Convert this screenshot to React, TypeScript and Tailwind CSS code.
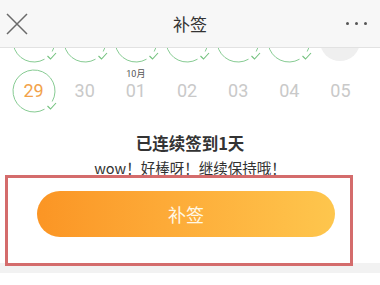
import React from 'react'

type Day = { n: string; state: 'signed' | 'empty' | 'today'; month?: string; color?: string; hidden?: boolean }

const topRow: Day[] = [
  { n: '22', state: 'signed', hidden: true },
  { n: '23', state: 'signed', hidden: true },
  { n: '24', state: 'signed', hidden: true },
  { n: '25', state: 'signed', hidden: true },
  { n: '26', state: 'signed', hidden: true },
  { n: '27', state: 'signed', hidden: true },
  { n: '28', state: 'today', hidden: true },
]

const bottomRow: Day[] = [
  { n: '29', state: 'signed', color: 'text-[#f2a24a]' },
  { n: '30', state: 'empty' },
  { n: '01', state: 'empty', month: '10月' },
  { n: '02', state: 'empty' },
  { n: '03', state: 'empty' },
  { n: '04', state: 'empty' },
  { n: '05', state: 'empty' },
]

function Ring() {
  return (
    <svg width="46" height="46" viewBox="0 0 46 46" className="absolute left-1/2 top-1/2 -translate-x-1/2 -translate-y-1/2">
      <path d="M33.5 41.19 A21 21 0 1 1 41.19 33.5" fill="none" stroke="#86cb92" strokeWidth="1" />
      <polyline points="36.5,38 39.5,41 45,35" fill="none" stroke="#74c27f" strokeWidth="1.1" />
    </svg>
  )
}

function Cell({ d }: { d: Day }) {
  return (
    <div className="relative flex h-[50px] items-center justify-center">
      {d.state === 'signed' && <Ring />}
      {d.state === 'today' && (
        <div className="absolute left-1/2 top-1/2 h-[40px] w-[40px] -translate-x-1/2 -translate-y-1/2 rounded-full bg-[#efefef]" />
      )}
      {d.month && (
        <span className="absolute left-1/2 top-[4px] -translate-x-1/2 text-[9px] leading-none text-[#555]">{d.month}</span>
      )}
      {!d.hidden && (
        <span className={`relative text-[18px] leading-none ${d.color ?? 'text-[#c9c9c9]'}`}>{d.n}</span>
      )}
    </div>
  )
}

export default function App() {
  return (
    <div className="relative h-[285px] w-[380px] overflow-hidden bg-white font-['Roboto','Noto_Sans_CJK_SC',sans-serif]">
      <header className="relative z-10 flex h-[48px] items-center justify-between border-b border-[#e2e2e2] bg-[#f7f7f7] pl-[6px] pr-[13px]">
        <svg width="22" height="22" viewBox="0 0 22 22">
          <path d="M1 1 L21 21 M21 1 L1 21" stroke="#6a6a6a" strokeWidth="1.5" fill="none" />
        </svg>
        <span className="absolute left-1/2 -translate-x-1/2 text-[17px] text-[#333] font-['Noto_Sans_CJK_SC',sans-serif]">补签</span>
        <div className="flex items-center gap-[6px]">
          <span className="h-[3px] w-[3px] rounded-full bg-[#555]" />
          <span className="h-[3px] w-[3px] rounded-full bg-[#555]" />
          <span className="h-[3px] w-[3px] rounded-full bg-[#555]" />
        </div>
      </header>

      <div className="h-[68px] overflow-hidden">
        <div className="-mt-[32px] ml-[8px] grid w-[358px] grid-cols-7">
          {topRow.map((d) => <Cell key={'t' + d.n} d={d} />)}
          {bottomRow.map((d) => <Cell key={'b' + d.n} d={d} />)}
        </div>
      </div>

      <div className="mt-[16px] text-center font-['Noto_Sans_CJK_SC',sans-serif] text-[16.5px] font-bold leading-[22px] text-[#333]">
        已连续签到1天
      </div>
      <div className="mt-[4px] text-center font-['Noto_Sans_CJK_SC',sans-serif] text-[14.5px] leading-[20px] text-[#333]">
        wow！好棒呀！继续保持哦！
      </div>

      <button
        type="button"
        className="ml-[37px] mt-[13px] flex h-[46px] w-[298px] items-center justify-center rounded-full bg-gradient-to-r from-[#fb9524] to-[#fec64d] font-['Noto_Sans_CJK_SC',sans-serif] text-[18px] text-[#fff8e6]"
      >
        补签
      </button>

      <div className="mt-[26px] h-[10px] bg-[#f2f2f2]" />

      <div className="pointer-events-none absolute left-[5px] top-[175px] h-[91px] w-[348px] border-[3px] border-[#d46c6c]" />
    </div>
  )
}
